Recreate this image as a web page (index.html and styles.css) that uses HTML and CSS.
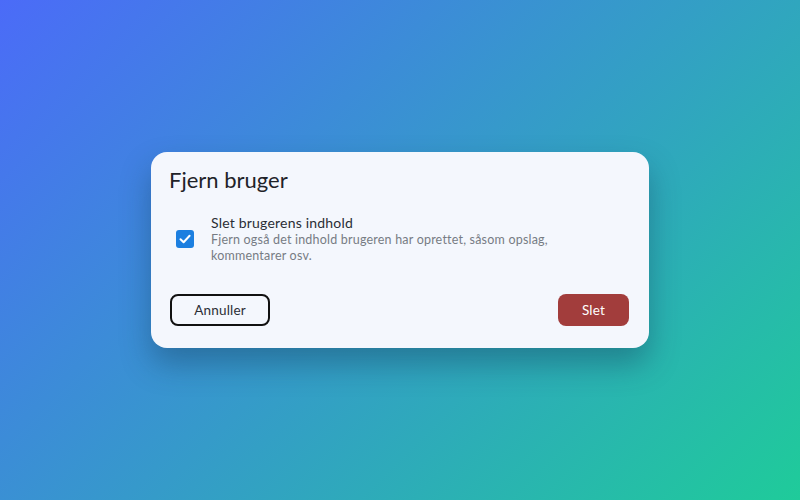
FILE: index.html
```html
<!DOCTYPE html>
<html lang="da">
<head>
<meta charset="utf-8">
<link rel="stylesheet" href="styles.css">
</head>
<body>
<div class="stage">
  <div class="dialog">
    <h1 class="title">Fjern bruger</h1>
    <div class="option">
      <span class="check">
        <svg width="14" height="14" viewBox="0 0 14 14"><path d="M2.5 7.2 L5.6 10.2 L11.6 3.8" fill="none" stroke="#fff" stroke-width="2" stroke-linecap="round" stroke-linejoin="round"/></svg>
      </span>
      <div class="option-text">
        <div class="label">Slet brugerens indhold</div>
        <div class="desc">Fjern også det indhold brugeren har oprettet, såsom opslag, kommentarer osv.</div>
      </div>
    </div>
    <div class="actions">
      <button class="btn btn-cancel">Annuller</button>
      <button class="btn btn-delete">Slet</button>
    </div>
  </div>
</div>
</body>
</html>
```

FILE: styles.css
```css
* { box-sizing: border-box; }
html, body { margin: 0; padding: 0; }
body {
  font-family: "Lato", "Noto Sans", sans-serif;
  width: 800px;
  height: 500px;
  overflow: hidden;
}
.stage {
  width: 800px;
  height: 500px;
  background: linear-gradient(135deg, #4b6bf8 0%, #1fcb9a 100%);
  display: flex;
  align-items: center;
  justify-content: center;
}
.dialog {
  width: 498px;
  height: 196px;
  background: #f4f7fd;
  border-radius: 16px;
  padding: 14px 20px 22px 18px;
  display: flex;
  flex-direction: column;
  box-shadow: 0 16px 30px rgba(20, 60, 90, 0.4);
}
.title {
  margin: 0;
  font-size: 22px;
  font-weight: 400;
  color: #1f2329;
  line-height: 28px;
}
.option {
  display: flex;
  align-items: center;
  margin-top: 20px;
  padding-left: 7px;
  gap: 17px;
}
.check {
  width: 18px;
  height: 18px;
  border-radius: 3px;
  background: #1c7fe0;
  display: flex;
  align-items: center;
  justify-content: center;
  flex: none;
}
.option-text {
  width: 360px;
}
.label {
  font-size: 14px;
  letter-spacing: 0.2px;
  color: #2a2e35;
  line-height: 18px;
}
.desc {
  font-size: 12.5px;
  letter-spacing: 0.2px;
  color: #777c84;
  line-height: 16px;
}
.actions {
  margin-top: auto;
  display: flex;
  justify-content: space-between;
  padding-left: 1px;
}
.btn {
  font-family: inherit;
  font-size: 13.5px;
  letter-spacing: 0.2px;
  height: 32px;
  border-radius: 8px;
  cursor: pointer;
}
.btn-cancel {
  width: 100px;
  background: transparent;
  border: 2px solid #111;
  color: #2a2e35;
}
.btn-delete {
  width: 71px;
  background: #a23d3c;
  border: none;
  color: #fff;
}
```
